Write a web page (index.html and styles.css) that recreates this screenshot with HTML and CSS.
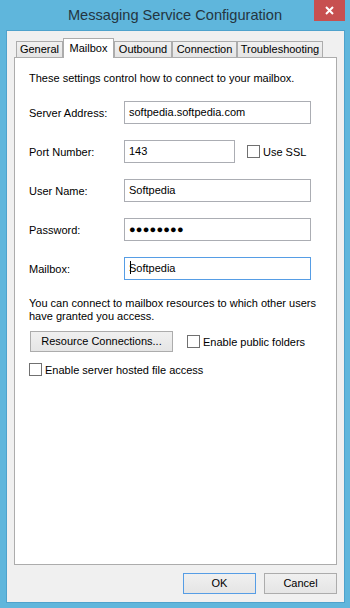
FILE: index.html
```html
<!DOCTYPE html>
<html>
<head>
<meta charset="utf-8">
<link rel="stylesheet" href="styles.css">
</head>
<body>
<div class="window">
  <div class="titlebar">
    <span class="title">Messaging Service Configuration</span>
    <div class="close">
      <svg width="9" height="9" viewBox="0 0 9 9"><path d="M1 1L8 8M8 1L1 8" stroke="#fff" stroke-width="2" fill="none"/></svg>
    </div>
  </div>
  <div class="client">
    <div class="tabs">
      <div class="tab t-general">General</div>
      <div class="tab t-mailbox sel">Mailbox</div>
      <div class="tab t-outbound">Outbound</div>
      <div class="tab t-connection">Connection</div>
      <div class="tab t-trouble">Troubleshooting</div>
    </div>
    <div class="panel">
      <p class="intro">These settings control how to connect to your mailbox.</p>
      <div class="form">
        <div class="row">
          <span class="label">Server Address:</span>
          <div class="input">softpedia.softpedia.com</div>
        </div>
        <div class="row">
          <span class="label">Port Number:</span>
          <div class="input port">143</div>
          <span class="check ssl"><span class="box"></span><span class="ctext">Use SSL</span></span>
        </div>
        <div class="row">
          <span class="label">User Name:</span>
          <div class="input">Softpedia</div>
        </div>
        <div class="row">
          <span class="label">Password:</span>
          <div class="input pwd">●●●●●●●●</div>
        </div>
        <div class="row">
          <span class="label">Mailbox:</span>
          <div class="input focus"><span class="caret"></span>Softpedia</div>
        </div>
      </div>
      <p class="note">You can connect to mailbox resources to which other users have granted you access.</p>
      <div class="resrow">
        <div class="btn res">Resource Connections...</div>
        <span class="check pub"><span class="box"></span><span class="ctext">Enable public folders</span></span>
      </div>
      <div class="hostrow">
        <span class="check"><span class="box"></span><span class="ctext">Enable server hosted file access</span></span>
      </div>
    </div>
    <div class="buttons">
      <div class="btn dlg default">OK</div>
      <div class="btn dlg">Cancel</div>
    </div>
  </div>
</div>
</body>
</html>
```
FILE: styles.css
```css
* { box-sizing: border-box; }
html, body { margin: 0; padding: 0; }
body {
  width: 350px;
  height: 608px;
  overflow: hidden;
  background: #5fb6dc;
  font-family: "Liberation Sans", Arial, sans-serif;
  font-size: 11px;
  color: #000;
}
.window { width: 350px; height: 608px; }
.titlebar {
  position: relative;
  height: 31px;
  text-align: center;
}
.title {
  display: inline-block;
  line-height: 30px;
  font-size: 14.6px;
  color: #243541;
}
.close {
  position: absolute;
  top: 0;
  left: 314px;
  width: 31px;
  height: 21px;
  background: #c75050;
  display: flex;
  align-items: center;
  justify-content: center;
}
.client {
  margin-left: 7px;
  width: 337px;
  height: 571px;
  background: #f0f0f0;
  box-shadow: 0 0 0 1px #4ea2cc;
  padding: 7px 7px 0 7px;
}
.tabs {
  height: 19px;
  display: flex;
  align-items: flex-end;
  padding-left: 2px;
}
.tab {
  height: 16px;
  line-height: 15px;
  text-align: center;
  border: 1px solid #acacac;
  border-bottom: none;
  background: linear-gradient(#f0f0f0, #e5e5e5);
  white-space: nowrap;
}
.tab.sel {
  position: relative;
  z-index: 1;
  height: 20px;
  margin-bottom: -1px;
  line-height: 18px;
  background: #fff;
}
.t-general { width: 47px; }
.t-mailbox { width: 51px; }
.t-outbound { width: 58px; }
.t-connection { width: 65px; }
.t-trouble { width: 86px; }
.panel {
  width: 323px;
  height: 508px;
  background: #fff;
  border: 1px solid #acacac;
  padding: 13px 14px 0 14px;
}
.intro { margin: 0; line-height: 15px; }
.form {
  margin-top: 15px;
  display: flex;
  flex-direction: column;
  gap: 16px;
}
.row {
  display: flex;
  align-items: center;
  height: 23px;
}
.label { width: 95px; flex: none; }
.input {
  position: relative;
  width: 187px;
  height: 23px;
  border: 1px solid #abadb3;
  background: #fff;
  padding-left: 4px;
  line-height: 20px;
  white-space: nowrap;
}
.input.port { width: 111px; }
.input.pwd { letter-spacing: 0.2px; font-size: 11px; }
.input.focus { border-color: #569de5; }
.caret {
  position: absolute;
  left: 5px;
  top: 3px;
  width: 1px;
  height: 13px;
  background: #000;
}
.check {
  display: inline-flex;
  align-items: center;
}
.box {
  width: 13px;
  height: 13px;
  border: 1px solid #707070;
  background: #fff;
  flex: none;
}
.ctext { margin-left: 3px; }
.check.ssl { margin-left: 12px; }
.note { margin: 17px 0 0 0; line-height: 13px; }
.resrow {
  margin-top: 8px;
  display: flex;
  align-items: center;
  height: 21px;
}
.btn {
  height: 21px;
  border: 1px solid #acacac;
  background: linear-gradient(#f0f0f0, #e5e5e5);
  text-align: center;
  line-height: 19px;
  white-space: nowrap;
}
.btn.res { width: 143px; margin-left: 1px; }
.check.pub { margin-left: 14px; }
.hostrow {
  margin-top: 11px;
  height: 13px;
  display: flex;
  align-items: center;
}
.buttons {
  margin-top: 8px;
  display: flex;
  justify-content: flex-end;
  gap: 8px;
}
.btn.dlg { width: 73px; }
.btn.default { border-color: #569de5; }
```
